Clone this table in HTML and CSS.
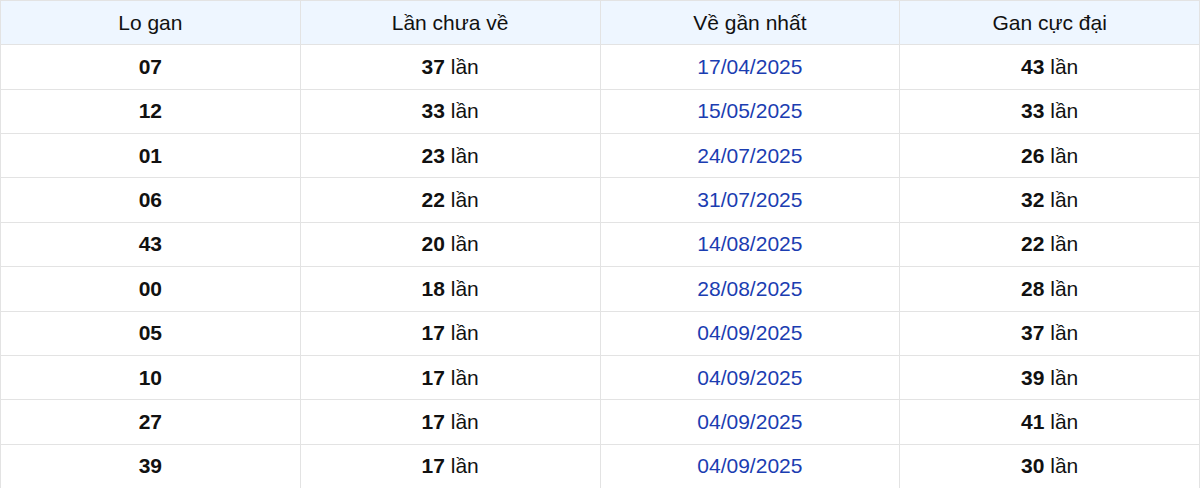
FILE: index.html
```html
<!DOCTYPE html>
<html lang="vi">
<head>
<meta charset="utf-8">
<title>Lo gan</title>
<link rel="stylesheet" href="styles.css">
</head>
<body>
<table class="gan-table">
  <thead>
    <tr><th>Lo gan</th><th>Lần chưa về</th><th>Về gần nhất</th><th>Gan cực đại</th></tr>
  </thead>
  <tbody>
    <tr><td class="num">07</td><td><b>37</b> lần</td><td class="date">17/04/2025</td><td><b>43</b> lần</td></tr>
    <tr><td class="num">12</td><td><b>33</b> lần</td><td class="date">15/05/2025</td><td><b>33</b> lần</td></tr>
    <tr><td class="num">01</td><td><b>23</b> lần</td><td class="date">24/07/2025</td><td><b>26</b> lần</td></tr>
    <tr><td class="num">06</td><td><b>22</b> lần</td><td class="date">31/07/2025</td><td><b>32</b> lần</td></tr>
    <tr><td class="num">43</td><td><b>20</b> lần</td><td class="date">14/08/2025</td><td><b>22</b> lần</td></tr>
    <tr><td class="num">00</td><td><b>18</b> lần</td><td class="date">28/08/2025</td><td><b>28</b> lần</td></tr>
    <tr><td class="num">05</td><td><b>17</b> lần</td><td class="date">04/09/2025</td><td><b>37</b> lần</td></tr>
    <tr><td class="num">10</td><td><b>17</b> lần</td><td class="date">04/09/2025</td><td><b>39</b> lần</td></tr>
    <tr><td class="num">27</td><td><b>17</b> lần</td><td class="date">04/09/2025</td><td><b>41</b> lần</td></tr>
    <tr><td class="num">39</td><td><b>17</b> lần</td><td class="date">04/09/2025</td><td><b>30</b> lần</td></tr>
  </tbody>
</table>
</body>
</html>
```
FILE: styles.css
```css
html, body {
  margin: 0;
  padding: 0;
  background: #ffffff;
  overflow: hidden;
}
body {
  font-family: "Liberation Sans", Arial, sans-serif;
  color: #111111;
}
.gan-table {
  width: 1200px;
  border-collapse: collapse;
  table-layout: fixed;
  font-size: 21px;
}
.gan-table th,
.gan-table td {
  border: 1px solid #e3e3e3;
  text-align: center;
  vertical-align: middle;
  padding: 0;
  height: 43.36px;
  line-height: 24px;
}
.gan-table th {
  background: #eef6ff;
  font-weight: normal;
  color: #111111;
}
.gan-table td b,
.gan-table td.num {
  font-weight: bold;
  color: #111111;
}
.gan-table td.date {
  color: #1b3db1;
}
```
